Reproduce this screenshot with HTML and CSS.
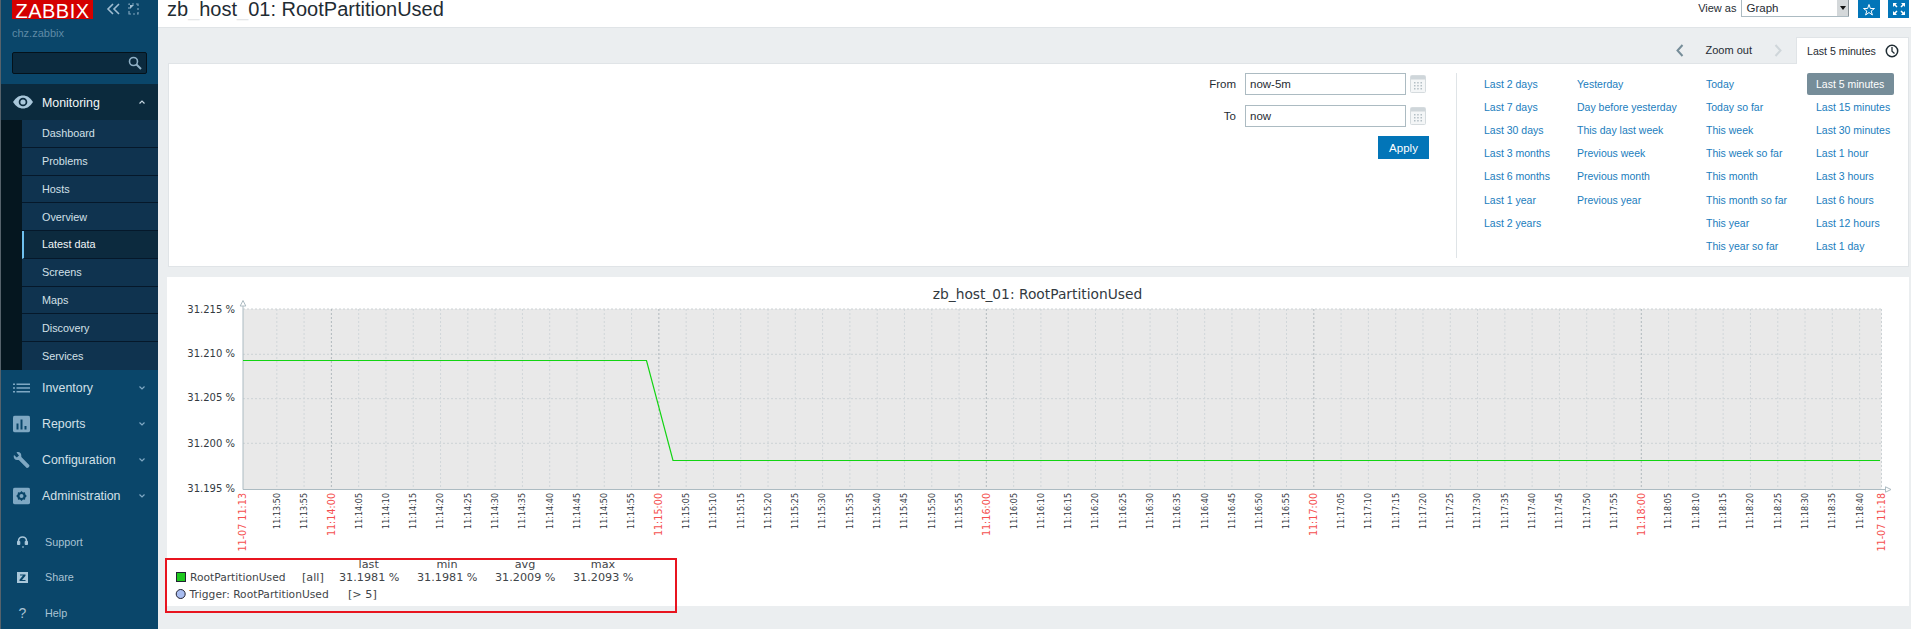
FILE: index.html
```html
<!DOCTYPE html>
<html lang="en">
<head>
    <meta charset="UTF-8">
    <title>zb_host_01: RootPartitionUsed</title>
    <link rel="stylesheet" href="styles.css">
</head>
<body>
    <aside class="sidebar">
        <div class="brand">
            <div class="logo">ZABBIX</div>
            <svg class="collapse" width="34" height="14" viewBox="0 0 34 14">
                <path d="M7 2 2 7l5 5M13 2 8 7l5 5" fill="none" stroke="#9fbdd1" stroke-width="1.6"/>
                <path d="M24 2h-1v1M26 2h2M30 2h2v2M23 5v2M23 9v3h2M27 12h2M32 6v2M32 10v2h-1" fill="none" stroke="#7fa3bb" stroke-width="1.2"/>
                <path d="M24 3h4l-4 4z" fill="#9fbdd1"/>
            </svg>
        </div>
        <div class="server">chz.zabbix</div>
        <div class="search">
            <svg width="14" height="14" viewBox="0 0 14 14">
                <circle cx="5.5" cy="5.5" r="4" fill="none" stroke="#8fb0c6" stroke-width="1.6"/>
                <path d="M8.5 8.5 13 13" stroke="#8fb0c6" stroke-width="2"/>
            </svg>
        </div>

        <div class="menu-item menu-open">
            <svg class="menu-icon" width="20" height="14" viewBox="0 0 20 14">
                <path d="M0 7C3 2.500 6 .5 10 .5S17 2.500 20 7c-3 4.500-6 6.500-10 6.500S3 11.500 0 7z" fill="#a9c7da"/>
                <circle cx="10" cy="7" r="4.300" fill="#0b2a3d"/>
                <circle cx="10" cy="7" r="2.600" fill="#a9c7da"/>
            </svg>
            <span>Monitoring</span>
            <svg class="caret" width="6" height="4" viewBox="0 0 6 4"><path d="M.5 3.500 3 1l2.500 2.500" fill="none" stroke="#c5d6e1" stroke-width="1.200"/></svg>
        </div>
        <div class="submenu">
            <a>Dashboard</a>
            <a>Problems</a>
            <a>Hosts</a>
            <a>Overview</a>
            <a class="active">Latest data</a>
            <a>Screens</a>
            <a>Maps</a>
            <a>Discovery</a>
            <a>Services</a>
        </div>

        <div class="menu-item">
            <svg class="menu-icon" width="17" height="11" viewBox="0 0 17 11">
                <path d="M0 1h2v1.500H0zM3.500 1H17v1.500H3.500zM0 4.700h2v1.500H0zM3.500 4.700H17v1.500H3.500zM0 8.500h2V10H0zM3.500 8.500H17V10H3.500z" fill="#7fa8c3"/>
            </svg>
            <span>Inventory</span>
            <svg class="caret" width="6" height="4" viewBox="0 0 6 4"><path d="M.5.500 3 3 5.500.500" fill="none" stroke="#7fa8c3" stroke-width="1.200"/></svg>
        </div>
        <div class="menu-item">
            <svg class="menu-icon" width="17" height="17" viewBox="0 0 17 17">
                <rect width="17" height="17" rx="2" fill="#7fa8c3"/>
                <path d="M3.500 8h2v6h-2zM7.500 4h2v10h-2zM11.500 10.500h2V14h-2z" fill="#0a466a"/>
            </svg>
            <span>Reports</span>
            <svg class="caret" width="6" height="4" viewBox="0 0 6 4"><path d="M.5.500 3 3 5.500.500" fill="none" stroke="#7fa8c3" stroke-width="1.200"/></svg>
        </div>
        <div class="menu-item">
            <svg class="menu-icon" width="17" height="17" viewBox="0 0 17 17">
                <path d="M1 3.500 3.800 6 6 4 3.500 1C5.800-.2 8.500 1.200 8.300 4.500c0 .6 0 1 .3 1.300l7.600 7.700c1 1.200-1.500 3.700-2.700 2.700L6 8.800c-.4-.3-.8-.4-1.400-.3C1.500 8.800 0 6 1 3.500z" fill="#7fa8c3"/>
            </svg>
            <span>Configuration</span>
            <svg class="caret" width="6" height="4" viewBox="0 0 6 4"><path d="M.5.500 3 3 5.500.500" fill="none" stroke="#7fa8c3" stroke-width="1.200"/></svg>
        </div>
        <div class="menu-item">
            <svg class="menu-icon" width="17" height="17" viewBox="0 0 17 17">
                <rect width="17" height="17" rx="2" fill="#7fa8c3"/>
                <path d="M8.500 3.500 10 5l2-.3.300 2 1.500 1.800-1.500 1.800-.3 2-2 -.3-1.500 1.500L7 12l-2 .3-.3-2-1.500-1.800 1.500-1.800.3-2L7 5z" fill="#0a466a"/>
                <circle cx="8.500" cy="8.500" r="2" fill="#7fa8c3"/>
            </svg>
            <span>Administration</span>
            <svg class="caret" width="6" height="4" viewBox="0 0 6 4"><path d="M.5.500 3 3 5.500.500" fill="none" stroke="#7fa8c3" stroke-width="1.200"/></svg>
        </div>

        <div class="links">
            <div class="link-item">
                <svg width="11" height="12" viewBox="0 0 11 12">
                    <path d="M1.500 7V5a4 4 0 0 1 8 0v2" fill="none" stroke="#a9c7da" stroke-width="1.600"/>
                    <path d="M.5 5.500h2.300v3H.5zM8.200 5.500h2.300v3H8.200zM7 11h-2" stroke="#a9c7da" fill="#a9c7da"/>
                </svg>
                <span>Support</span>
            </div>
            <div class="link-item">
                <svg width="11" height="11" viewBox="0 0 11 11">
                    <rect width="11" height="11" fill="#a9c7da"/>
                    <path d="M3 2.500h5.500v1.300L5 8h3.500v1H2.500V7.800L6 3.500H3z" fill="#0a466a"/>
                </svg>
                <span>Share</span>
            </div>
            <div class="link-item">
                <b class="help-mark">?</b>
                <span>Help</span>
            </div>
        </div>
    </aside>

    <main class="content">
        <header class="page-head">
            <h1>zb<span class="faint">_</span>host<span class="faint">_</span>01: RootPartitionUsed</h1>
            <div class="head-controls">
                <label>View as</label>
                <div class="select">Graph<i class="select-arrow"></i></div>
                <button class="icon-btn">
                    <svg width="12" height="13" viewBox="0 0 12 13"><path d="M6 1.500 7.400 5.500H11.500L8.200 8 9.400 12 6 9.500 2.600 12 3.800 8 .5 5.500H4.600z" fill="none" stroke="#fff" stroke-width="1"/></svg>
                </button>
                <button class="icon-btn icon-btn-last">
                    <svg width="14" height="14" viewBox="0 0 14 14"><path d="M1 1h4L3.600 2.400 5.500 4.500 4.500 5.500 2.400 3.600 1 5zM13 1v4L11.600 3.600 9.500 5.500 8.500 4.500 10.400 2.400 9 1zM1 13V9l1.400 1.400L4.500 8.500l1 1L3.600 11.600 5 13zM13 13H9l1.400-1.400L8.500 9.500l1-1 2.100 1.900L13 9z" fill="#fff"/></svg>
                </button>
            </div>
        </header>

        <div class="filter-tabs">
            <svg class="chevron" width="8" height="13" viewBox="0 0 8 13"><path d="M6.500 1 1.500 6.500l5 5.500" fill="none" stroke="#768d99" stroke-width="2"/></svg>
            <span class="zoom-out">Zoom out</span>
            <svg class="chevron next" width="8" height="13" viewBox="0 0 8 13"><path d="M1.500 1l5 5.500-5 5.500" fill="none" stroke="#cfd6da" stroke-width="2"/></svg>
            <div class="tab">
                <span>Last 5 minutes</span>
                <svg width="14" height="14" viewBox="0 0 14 14"><circle cx="7" cy="7" r="5.700" fill="none" stroke="#1f2c33" stroke-width="1.500"/><path d="M7 3v4.300l2.500 2.200" fill="none" stroke="#1f2c33" stroke-width="1.300"/></svg>
            </div>
        </div>

        <section class="filter-panel">
            <form class="time-form">
                <label>From</label>
                <input type="text" value="now-5m">
                <svg width="16" height="18" viewBox="0 0 16 18"><rect x=".5" y=".5" width="15" height="17" rx="1" fill="#f4f6f7" stroke="#d5dbde"/><rect x="1" y="1" width="14" height="3.500" fill="#cfd6da"/><path d="M4 7h1.500v1.500H4zM7.200 7h1.500v1.500H7.200zM10.500 7H12v1.500h-1.500zM4 10h1.500v1.500H4zM7.200 10h1.500v1.500H7.200zM10.500 10H12v1.500h-1.500zM4 13h1.500v1.500H4zM7.200 13h1.500v1.500H7.200zM10.500 13H12v1.500h-1.500z" fill="#b4bfc5"/></svg>
                <label>To</label>
                <input type="text" value="now">
                <svg width="16" height="18" viewBox="0 0 16 18"><rect x=".5" y=".5" width="15" height="17" rx="1" fill="#f4f6f7" stroke="#d5dbde"/><rect x="1" y="1" width="14" height="3.500" fill="#cfd6da"/><path d="M4 7h1.500v1.500H4zM7.200 7h1.500v1.500H7.200zM10.500 7H12v1.500h-1.500zM4 10h1.500v1.500H4zM7.200 10h1.500v1.500H7.200zM10.500 10H12v1.500h-1.500zM4 13h1.500v1.500H4zM7.200 13h1.500v1.500H7.200zM10.500 13H12v1.500h-1.500z" fill="#b4bfc5"/></svg>
                <button class="apply" type="button">Apply</button>
            </form>
            <div class="presets">
                <div class="preset-col col-1">
                    <a>Last 2 days</a><a>Last 7 days</a><a>Last 30 days</a><a>Last 3 months</a><a>Last 6 months</a><a>Last 1 year</a><a>Last 2 years</a>
                </div>
                <div class="preset-col col-2">
                    <a>Yesterday</a><a>Day before yesterday</a><a>This day last week</a><a>Previous week</a><a>Previous month</a><a>Previous year</a>
                </div>
                <div class="preset-col col-3">
                    <a>Today</a><a>Today so far</a><a>This week</a><a>This week so far</a><a>This month</a><a>This month so far</a><a>This year</a><a>This year so far</a>
                </div>
                <div class="preset-col col-4">
                    <a class="selected">Last 5 minutes</a><a>Last 15 minutes</a><a>Last 30 minutes</a><a>Last 1 hour</a><a>Last 3 hours</a><a>Last 6 hours</a><a>Last 12 hours</a><a>Last 1 day</a>
                </div>
            </div>
        </section>

        <section class="graph-box">
            <svg id="graph" class="graph" width="1742" height="329" viewBox="167 277 1742 329"></svg>
            <div class="annotation"></div>
        </section>
    </main>

    <script src="chart.js"></script>
</body>
</html>
```

FILE: styles.css
```css
html, body {
    margin: 0;
    padding: 0;
    height: 629px;
    overflow: hidden;
}
body {
    display: flex;
    font-family: "Liberation Sans", Arial, sans-serif;
    background-color: #ebeef0;
    color: #1f2c33;
}

/* sidebar */
.sidebar {
    width: 157px;
    flex: none;
    background-color: #0a466a;
    border-left: 1px solid #56626b;
    overflow: hidden;
}
.brand {
    display: flex;
    height: 19px;
    padding-left: 11px;
}
.logo {
    width: 81px;
    height: 19px;
    background-color: #d40000;
    color: white;
    font-size: 20px;
    letter-spacing: .5px;
    line-height: 23px;
    text-align: center;
}
.collapse {
    margin: 2px 0 0 13px;
}
.server {
    margin: 8px 0 0 11px;
    height: 13px;
    font-size: 11px;
    line-height: 13px;
    color: #5f8aa6;
}
.search {
    display: flex;
    align-items: center;
    justify-content: flex-end;
    box-sizing: border-box;
    width: 135px;
    height: 22px;
    margin: 12px 0 10px 11px;
    padding-right: 4px;
    background-color: #0b2a3e;
    border: 1px solid #04121b;
    border-radius: 2px;
}
.menu-item {
    display: flex;
    align-items: center;
    height: 36px;
    position: relative;
    padding-left: 41px;
    font-size: 12.4px;
    color: #d3e0e8;
}
.menu-item span {
    margin-top: 1px;
}
.menu-open {
    background-color: #0b2a3d;
    color: #f2f6f8;
}
.menu-icon {
    position: absolute;
    left: 12px;
    top: 50%;
    transform: translateY(-50%);
}
.caret {
    margin-left: auto;
    margin-right: 13px;
}
.submenu {
    background-color: #05161f;
    padding-left: 21px;
}
.submenu a {
    display: flex;
    align-items: center;
    box-sizing: border-box;
    height: 27.78px;
    padding-left: 20px;
    background-color: #0f334f;
    border-bottom: 1px solid #05182a;
    font-size: 10.8px;
    color: #d3e0e8;
}
.submenu a:last-child {
    border-bottom: none;
}
.submenu a.active {
    background-color: #0c2a3e;
    border-left: 2px solid #6fc0ee;
    padding-left: 18px;
    color: #f2f6f8;
}
.links {
    padding-top: 10px;
}
.link-item {
    display: flex;
    align-items: center;
    height: 35.5px;
    font-size: 10.8px;
    color: #a9c3d4;
}
.link-item svg, .help-mark {
    width: 11px;
    margin-left: 16px;
    flex: none;
    text-align: center;
}
.link-item span {
    margin-left: 17px;
}
.help-mark {
    font-size: 14px;
    font-weight: normal;
}

/* page head */
.content {
    flex: 1;
    min-width: 0;
}
.page-head {
    display: flex;
    justify-content: space-between;
    box-sizing: border-box;
    height: 28px;
    padding: 0 2px 0 9px;
    background-color: white;
    border-bottom: 1px solid #e0e4e7;
}
.page-head h1 {
    margin: 0;
    font-size: 20px;
    font-weight: normal;
    line-height: 16px;
    padding-top: 1px;
    color: #1f2c33;
}
.faint {
    color: #e4e6e8;
}
.head-controls {
    display: flex;
    align-items: flex-start;
    font-size: 11px;
}
.head-controls label {
    margin-right: 4px;
    line-height: 16px;
}
.select {
    position: relative;
    box-sizing: border-box;
    width: 108.5px;
    height: 17px;
    margin-right: 9px;
    padding-left: 5px;
    border-left: 1px solid #acbbc2;
    border-bottom: 1px solid #acbbc2;
    font-size: 11.5px;
    line-height: 16px;
}
.select-arrow {
    position: absolute;
    right: 0;
    top: 0;
    width: 11px;
    height: 16px;
    background-color: #d4d8da;
    border-right: 1px solid #8a9499;
}
.select-arrow::after {
    content: "";
    position: absolute;
    left: 3px;
    top: 6px;
    border: 3px solid transparent;
    border-top: 4px solid #111;
    border-bottom: none;
}
.icon-btn {
    display: flex;
    align-items: center;
    justify-content: center;
    width: 22px;
    height: 18px;
    padding: 0;
    margin-left: 0;
    border: none;
    background-color: #0275b8;
}
.icon-btn-last {
    width: 21px;
    margin-left: 8px;
}

/* filter */
.filter-tabs {
    display: flex;
    justify-content: flex-end;
    align-items: flex-end;
    height: 35px;
    padding-right: 2px;
}
.chevron {
    align-self: center;
    margin-top: 9px;
}
.zoom-out {
    align-self: center;
    margin: 9px 22px 0 22px;
    font-size: 11px;
}
.next {
    margin-right: 14px;
}
.tab {
    display: flex;
    align-items: center;
    box-sizing: border-box;
    width: 113px;
    height: 27px;
    padding-left: 10px;
    gap: 9px;
    background-color: white;
    border: 1px solid #e0e4e7;
    border-bottom: none;
    font-size: 10.6px;
    margin-bottom: -1px;
    position: relative;
}
.filter-panel {
    display: flex;
    justify-content: flex-end;
    box-sizing: border-box;
    height: 204px;
    margin: 0 2px 0 10px;
    padding: 9px 0 6px;
    background-color: white;
    border: 1px solid #e0e4e7;
}
.time-form {
    display: grid;
    grid-template-columns: auto 161px 16px;
    grid-auto-rows: min-content;
    align-items: center;
    column-gap: 9px;
    row-gap: 10px;
    margin-right: 25px;
    font-size: 11.5px;
}
.time-form label {
    text-align: right;
}
.time-form svg {
    margin-left: -5px;
}
.time-form input {
    box-sizing: border-box;
    width: 161px;
    height: 22px;
    padding: 0 4px;
    border: 1px solid #acbbc2;
    background-color: white;
    font-family: inherit;
    font-size: 11.5px;
    color: #1f2c33;
}
.apply {
    grid-column: 2 / 4;
    justify-self: end;
    width: 51px;
    height: 23px;
    margin: -1px 2px 0 0;
    border: none;
    background-color: #0275b8;
    color: white;
    font-family: inherit;
    font-size: 11.5px;
}
.presets {
    display: flex;
    height: 185px;
    padding-left: 27px;
    border-left: 1px solid #dfe4e7;
    margin-right: 14px;
    font-size: 10.5px;
}
.preset-col {
    margin-top: -1px;
}
.preset-col a {
    display: flex;
    align-items: center;
    height: 23.2px;
    color: #1a7dbd;
}
.col-1 { width: 93px; }
.col-2 { width: 129px; }
.col-3 { width: 110px; }
.col-4 { width: 78px; }
.preset-col a.selected {
    box-sizing: border-box;
    width: 87px;
    height: 22.4px;
    margin: 1px 0 -.2px -9px;
    padding-left: 9px;
    background-color: #768d99;
    color: white;
    border-radius: 2px;
}

/* graph */
.graph-box {
    position: relative;
    height: 329px;
    margin: 10px 2px 0 9px;
    background-color: white;
}
.graph {
    display: block;
    font-family: "DejaVu Sans", sans-serif;
}
.annotation {
    position: absolute;
    left: -2px;
    top: 281px;
    box-sizing: border-box;
    width: 512px;
    height: 55px;
    border: 2px solid #e8141f;
}
```

FILE: chart.js
```js
// draws the graph as svg, coordinates are page pixels
const svg = document.getElementById('graph');
let out = '';

const left = 243, right = 1881.5, top_ = 309, bottom = 489.5;
const ink = '#333a3f';
const red = '#f55050';

function text(x, y, str, size, color, anchor) {
    out += `<text x="${x}" y="${y}" font-size="${size}" fill="${color}" text-anchor="${anchor || 'start'}">${str}</text>`;
}

function tickLabel(x, str, size, color) {
    const bx = x + size * 0.36;
    out += `<text transform="translate(${bx} 493) rotate(-90)" font-size="${size}" fill="${color}" text-anchor="end">${str}</text>`;
}

function grid(x1, y1, x2, y2, color) {
    out += `<line x1="${x1}" y1="${y1}" x2="${x2}" y2="${y2}" stroke="${color}" stroke-dasharray="2 2"/>`;
}

text(1037.5, 298.5, 'zb_host_01: RootPartitionUsed', 13.8, '#333a3f', 'middle');

out += `<rect x="${left}" y="${top_}" width="${right - left}" height="${bottom - top_}" fill="#e9e9e9"/>`;

// value grid
const rows = [
    [309, 312.7, '31.215 %'],
    [354.3, 356.7, '31.210 %'],
    [398.7, 401.4, '31.205 %'],
    [443.3, 447, '31.200 %'],
    [489.5, 491.7, '31.195 %']
];
rows.forEach(r => {
    if (r[0] < bottom) grid(left, r[0], right, r[0], '#ccd2d5');
    text(235, r[1], r[2], 10, ink, 'end');
});

// time grid, one tick per 5 seconds
const step = 27.29;
for (let i = 0; i < 59; i++) {
    const x = 276.8 + i * step;
    const secs = 13 * 60 + 50 + i * 5;
    const mm = String(Math.floor(secs / 60)).padStart(2, '0');
    const ss = String(secs % 60).padStart(2, '0');
    const major = ss === '00';
    grid(x, top_, x, bottom, major ? '#b0b8bc' : '#d0d6d9');
    if (major) {
        tickLabel(x, `11:${mm}:00`, 9.6, red);
    } else {
        tickLabel(x, `11:${mm}:${ss}`, 8, ink);
    }
}
grid(right, top_, right, bottom, '#ccd2d5');
tickLabel(left, '11-07 11:13', 9.6, red);
tickLabel(right, '11-07 11:18', 9.6, red);

// axes
out += `<path d="M${left} 306V${bottom}H1885" fill="none" stroke="#acbbc2"/>`;
out += `<path d="M243 300.500l2.800 5.500h-5.600zM1885.500 486.800l5.500 2.700-5.500 2.700z" fill="white" stroke="#acbbc2"/>`;

// data
out += `<path d="M243 360.500H646.500L673 460.500H1880" fill="none" stroke="#12d412" stroke-width="1.200"/>`;

// legend
const legend = '#3f4549';
const nameSize = 10.7;
[[368.7, 'last'], [447, 'min'], [525, 'avg'], [603, 'max']].forEach(h => {
    text(h[0], 568, h[1], 11.2, legend, 'middle');
});
out += `<rect x="176.500" y="572.500" width="9" height="9" fill="#1ec81e" stroke="#223"/>`;
text(190, 581, 'RootPartitionUsed', nameSize, legend);
text(302, 581, '[all]', 11.2, legend);
[339, 417, 495, 573].forEach((x, i) => {
    text(x, 581, ['31.1981 %', '31.1981 %', '31.2009 %', '31.2093 %'][i], 11.2, legend);
});
out += `<circle cx="180.700" cy="594" r="4.500" fill="#a9bdf0" stroke="#223"/>`;
text(189.5, 598, 'Trigger: RootPartitionUsed', nameSize, legend);
text(348, 598, '[&gt; 5]', 11.2, legend);

svg.innerHTML = out;
```
